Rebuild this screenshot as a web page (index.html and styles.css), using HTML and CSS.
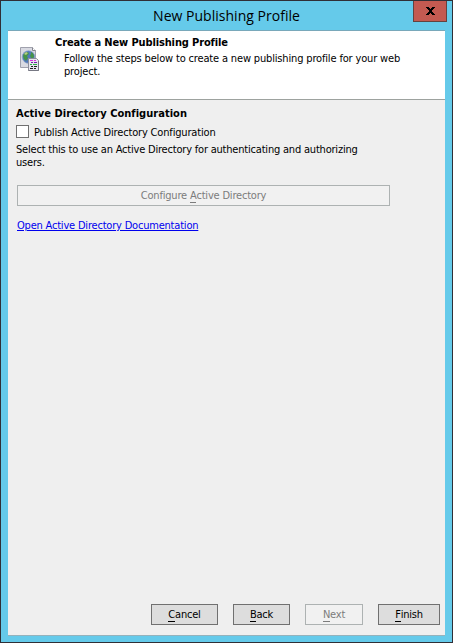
FILE: index.html
```html
<!DOCTYPE html>
<html lang="en">
<head>
<meta charset="utf-8">
<title>New Publishing Profile</title>
<link rel="stylesheet" href="styles.css">
</head>
<body>
<div class="window">
  <header class="titlebar">
    <h1 class="title">New Publishing Profile</h1>
    <button class="close" aria-label="Close"><svg width="9" height="8" viewBox="0 0 9 8" shape-rendering="crispEdges"><path d="M0 0h3v1h1v1h1V1h1V0h3v1H8v1H7v1H6v2h1v1h1v1h1v1H6V7H5V6H4v1H3v1H0V7h1V6h1V5h1V3H2V2H1V1H0z"/></svg></button>
  </header>
  <main class="client">
    <section class="banner">
      <svg class="icon" width="20" height="25" viewBox="0 0 20 25">
        <path d="M.5.5h12l3 3v17H.5z" fill="#d9dae2" stroke="#a0a1ad"/>
        <path d="M12.5.5v3h3" fill="#fff" stroke="#85868f"/>
        <circle cx="8.5" cy="10" r="6.3" fill="#5279b9" stroke="#8fa7cc" stroke-width=".7"/>
        <path d="M3 9q1-4 5-4l1 2-2 2 1 2-2 3-2-2zM11 5q3 1 3 5l-2 2-2-3 1-2z" fill="#469447"/>
        <path d="M4 7l2-2 2 1-2 2z" fill="#b6ce82"/>
        <path d="M8.5 11.5h8l2 2v10h-10z" fill="#e6e6ee" stroke="#8e8f9b"/>
        <path d="M18.5 14v9.500h-10" fill="none" stroke="#777883"/>
        <g shape-rendering="crispEdges">
          <path d="M10 13h3v1h-3zM14 13h2v1h-2z" fill="#e22ee2"/>
          <path d="M11 15h2v1h-2zM14 15h3v1h-3z" fill="#7520aa"/>
          <path d="M10 17h2v1h-2zM13 17h4v1h-4z" fill="#2cad44"/>
          <path d="M11 19h2v1h-2zM14 19h3v1h-3zM10 21h3v1h-3zM14 21h2v1h-2z" fill="#222"/>
        </g>
      </svg>
      <div class="intro">
        <h2 class="heading intro-heading">Create a New Publishing Profile</h2>
        <p class="intro-text">Follow the steps below to create a new publishing profile for your web<br>project.</p>
      </div>
    </section>
    <section class="content">
      <h2 class="heading">Active Directory Configuration</h2>
      <label class="option"><input class="check" type="checkbox"><span class="option-text">Publish Active Directory Configuration</span></label>
      <p class="description">Select this to use an Active Directory for authenticating and authorizing<br>users.</p>
      <button class="btn configure" disabled><span>Configure <span class="key">A</span>ctive Directory</span></button>
      <a class="link" href="#">Open Active Directory Documentation</a>
    </section>
    <footer class="actions">
      <button class="btn cancel"><span><span class="key">C</span>ancel</span></button>
      <button class="btn back"><span><span class="key">B</span>ack</span></button>
      <button class="btn next" disabled><span><span class="key">N</span>ext</span></button>
      <button class="btn finish"><span><span class="key">F</span>inish</span></button>
    </footer>
  </main>
</div>
</body>
</html>
```
FILE: styles.css
```css
* { box-sizing: border-box; }
body { margin: 0; }
h1, h2, p { margin: 0; }
button { font: inherit; padding: 0; }

.window {
  display: flex;
  flex-direction: column;
  width: 453px;
  height: 643px;
  padding: 0 7px 6px;
  border: 1px solid #302f36;
  background: #65caea;
  font: 11px/13px Tahoma, "DejaVu Sans Condensed", sans-serif;
  letter-spacing: -0.2px;
  color: #000;
}
.titlebar {
  position: relative;
  flex: none;
  height: 29px;
  text-align: center;
}
.title {
  font: 400 14px/29px "Segoe UI", "Open Sans", sans-serif;
  letter-spacing: 0.02px;
}
.close {
  position: absolute;
  top: 0;
  right: -2px;
  display: flex;
  align-items: center;
  justify-content: center;
  width: 34px;
  height: 21px;
  border: 1px solid #65423f;
  border-top: 0;
  background: #c45a51;
}
.client {
  display: flex;
  flex: 1;
  flex-direction: column;
  border-top: 1px solid #79a8ba;
  border-bottom: 1px solid #94b2bc;
  background: #efefef;
}
.banner {
  display: flex;
  height: 69px;
  border-bottom: 1px solid #9da29f;
  background: #fff;
}
.icon { margin: 16px 15px 0 12px; }
.heading {
  font-size: 11px;
  line-height: 13px;
  font-weight: 700;
  letter-spacing: 0.03px;
}
.intro { padding-top: 5px; }
.intro-heading { letter-spacing: -0.13px; }
.intro-text { padding: 3px 0 0 9px; letter-spacing: -0.16px; }
.content { flex: 1; padding: 7px 8px 0; }
.option { display: flex; align-items: center; height: 13px; margin-top: 5px; }
.option-text { padding-top: 2px; letter-spacing: -0.17px; }
.check {
  appearance: none;
  width: 13px;
  height: 13px;
  margin: 0 5px 0 0;
  border: 1px solid #707070;
  background: #fff;
}
.description { margin-top: 5px; }
.btn {
  height: 21px;
  border: 1px solid #707070;
  background: #ddd;
  color: #000;
  letter-spacing: inherit;
}
.btn:disabled {
  border-color: #adb2b2;
  background: #f1f1f1;
  color: #7c7c7c;
}
.key { display: inline-block; height: 14px; margin-bottom: -1px; border-bottom: 1px solid currentColor; }
.configure { display: block; width: 373px; margin: 16px 0 0 1px; }
.link {
  display: inline-block;
  margin: 13px 0 0 1px;
  color: #00e;
  text-decoration: underline;
}
.actions { display: flex; gap: 15px; justify-content: flex-end; padding: 0 5px 10px; }
.cancel { width: 67px; }
.back { width: 57px; }
.next { width: 58px; }
.finish { width: 62px; }
```
